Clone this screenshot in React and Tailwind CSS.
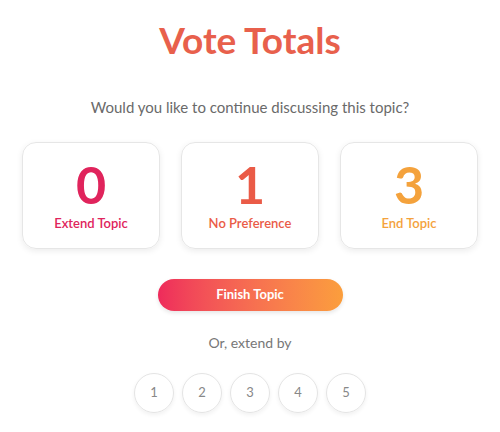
import React from "react";

const cards = [
  { value: "0", label: "Extend Topic", color: "text-[#e0245c]" },
  { value: "1", label: "No Preference", color: "text-[#ea5b47]" },
  { value: "3", label: "End Topic", color: "text-[#f4a23c]" },
];

export default function App() {
  return (
    <div className="w-[500px] h-[432px] bg-white flex flex-col items-center font-['Lato',sans-serif]">
      <h1 className="mt-[18px] text-[37px] leading-[44px] font-bold text-[#e8604c]">Vote Totals</h1>
      <p className="mt-[35px] text-[15px] leading-5 text-[#6a6a6a]">Would you like to continue discussing this topic?</p>
      <div className="mt-[25px] flex gap-[21px]">
        {cards.map((c) => (
          <div
            key={c.label}
            className="w-[138px] h-[107px] rounded-[14px] border border-[#e6e6e6] shadow-[0_2px_6px_rgba(0,0,0,0.08)] flex flex-col items-center"
          >
            <div className={`mt-[15px] text-[52px] leading-[52px] font-bold ${c.color}`}>{c.value}</div>
            <div className={`mt-[5px] text-[13px] leading-4 font-semibold ${c.color}`}>{c.label}</div>
          </div>
        ))}
      </div>
      <button className="mt-[30px] w-[185px] h-[32px] rounded-full bg-gradient-to-r from-[#ee2a5b] to-[#fb9e3c] text-white text-[13px] font-bold shadow-[0_2px_4px_rgba(0,0,0,0.1)]">
        Finish Topic
      </button>
      <p className="mt-[22px] text-[14px] leading-5 text-[#777]">Or, extend by</p>
      <div className="mt-[20px] flex gap-[8px]">
        {[1, 2, 3, 4, 5].map((n) => (
          <div
            key={n}
            className="w-[40px] h-[40px] rounded-full border border-[#e4e4e4] shadow-[0_2px_4px_rgba(0,0,0,0.06)] flex items-center justify-center text-[13px] text-[#888]"
          >
            {n}
          </div>
        ))}
      </div>
    </div>
  );
}
